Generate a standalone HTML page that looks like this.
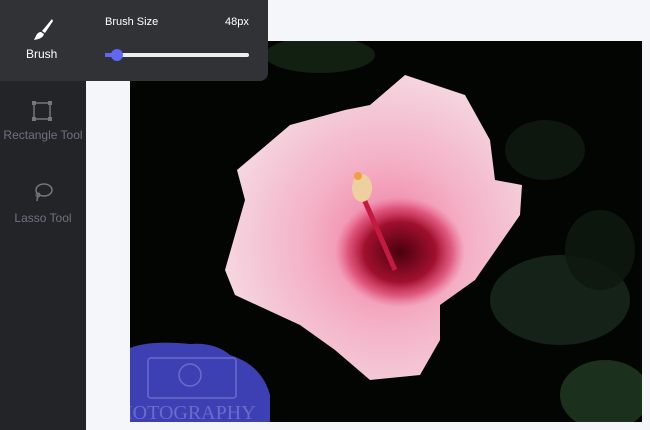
<!DOCTYPE html>
<html><head><style>
*{margin:0;padding:0;box-sizing:border-box}
body{width:650px;height:430px;background:#f5f6fa;position:relative;overflow:hidden;font-family:"Liberation Sans",sans-serif}
.side{position:absolute;left:0;top:0;width:86px;height:430px;background:#232428}
.pop{position:absolute;left:0;top:0;width:268px;height:81px;background:#313236;border-radius:0 0 8px 0;color:#fff}
.lbl{position:absolute;font-size:12px;color:#fff}
.tool{position:absolute;left:0;width:86px;text-align:center;font-size:12px;color:#6e7280}
</style></head><body>
<div class="side"></div>
<svg style="position:absolute;left:130px;top:41px" width="512" height="381" viewBox="130 41 512 381">
<defs>
<radialGradient id="pk" cx="0.55" cy="0.55" r="0.6"><stop offset="0" stop-color="#f07aa0"/><stop offset="0.45" stop-color="#f4b0c6"/><stop offset="1" stop-color="#f5dde5"/></radialGradient>
<radialGradient id="rd" cx="0.5" cy="0.5" r="0.5"><stop offset="0" stop-color="#4a000c"/><stop offset="0.55" stop-color="#a0102e"/><stop offset="0.8" stop-color="#d02a55" stop-opacity="0.6"/><stop offset="1" stop-color="#e84a7a" stop-opacity="0"/></radialGradient>
</defs>
<rect x="130" y="41" width="512" height="381" fill="#030503"/>
<ellipse cx="560" cy="300" rx="70" ry="45" fill="#16261a" opacity="0.9"/>
<ellipse cx="605" cy="395" rx="45" ry="35" fill="#1f3620" opacity="0.9"/>
<ellipse cx="320" cy="55" rx="55" ry="18" fill="#142414" opacity="0.9"/>
<ellipse cx="545" cy="150" rx="40" ry="30" fill="#0e1a0e" opacity="0.9"/>
<ellipse cx="600" cy="250" rx="35" ry="40" fill="#0e180e" opacity="0.9"/>
<polygon fill="url(#pk)" points="237,170 290,125 345,110 370,105 405,75 465,95 490,140 495,180 522,185 520,215 475,280 440,305 440,340 420,375 370,380 335,350 300,325 235,295 225,270 245,200"/>
<ellipse cx="400" cy="252" rx="65" ry="55" fill="url(#rd)"/>
<path d="M360 190 L395 270" stroke="#c21a40" stroke-width="5"/>
<ellipse cx="362" cy="188" rx="10" ry="14" fill="#eed0a0"/>
<circle cx="358" cy="176" r="4" fill="#f0a040"/>
<path d="M130 348 Q150 340 190 344 Q215 342 230 355 Q262 365 270 395 L270 422 L130 422Z" fill="#3d40b3"/>
<text x="126" y="419" font-family="Liberation Serif" font-size="20" fill="#6a6ccc">IOTOGRAPHY</text>
<g fill="none" stroke="#6a6ccc" stroke-width="1.5"><circle cx="190" cy="375" r="11"/><rect x="148" y="358" width="88" height="40" rx="3"/></g>
</svg>
<div class="pop">
 <svg style="position:absolute;left:32px;top:18px" width="22" height="24" viewBox="0 0 22 24"><path d="M20 1 L10 13 L13 15 L21 3Z M9 14 C5 14 4 18 2 22 C7 21 11 20 12 16Z" fill="#fff"/></svg>
 <div class="lbl" style="left:26px;top:47px">Brush</div>
 <div class="lbl" style="left:105px;top:16px;font-size:11px">Brush Size</div>
 <div class="lbl" style="left:225px;top:16px;font-size:11px">48px</div>
 <div style="position:absolute;left:105px;top:53px;width:144px;height:4px;background:#eee;border-radius:2px"></div>
 <div style="position:absolute;left:105px;top:53px;width:12px;height:4px;background:#6166f5"></div>
 <div style="position:absolute;left:111px;top:49px;width:12px;height:12px;background:#6166f5;border-radius:50%"></div>
</div>
<svg style="position:absolute;left:32px;top:101px" width="20" height="20"><rect x="2" y="2" width="16" height="16" fill="none" stroke="#777" stroke-width="1.5"/><rect x="0" y="0" width="4" height="4" fill="#777"/><rect x="16" y="0" width="4" height="4" fill="#777"/><rect x="0" y="16" width="4" height="4" fill="#777"/><rect x="16" y="16" width="4" height="4" fill="#777"/></svg>
<div class="tool" style="top:128px">Rectangle Tool</div>
<svg style="position:absolute;left:32px;top:182px" width="22" height="22"><ellipse cx="12" cy="8" rx="8" ry="6" fill="none" stroke="#777" stroke-width="1.5"/><path d="M6 12 L5 19" stroke="#777" stroke-width="1.5"/><circle cx="6" cy="13" r="2" fill="none" stroke="#777"/></svg>
<div class="tool" style="top:211px">Lasso Tool</div>
</body></html>
